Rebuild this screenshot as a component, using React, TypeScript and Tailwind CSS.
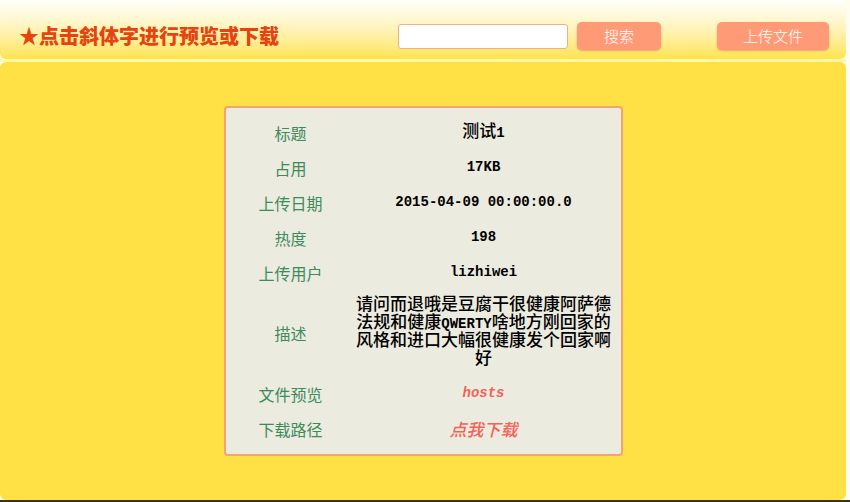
const mono = "font-['Liberation_Mono','Noto_Sans_CJK_SC',monospace] text-[14px]";
const cjk = 'text-[17px] font-medium';

const rows: { label: string; value: React.ReactNode; tall?: boolean }[] = [
  {
    label: '标题',
    value: (
      <>
        <span className={cjk}>测试</span>1
      </>
    ),
  },
  { label: '占用', value: '17KB' },
  { label: '上传日期', value: '2015-04-09 00:00:00.0' },
  { label: '热度', value: '198' },
  { label: '上传用户', value: 'lizhiwei' },
  {
    label: '描述',
    value: (
      <>
        <span className={cjk}>请问而退哦是豆腐干很健康阿萨德</span>
        <br />
        <span className={cjk}>法规和健康</span>QWERTY<span className={cjk}>啥地方刚回家的</span>
        <br />
        <span className={cjk}>风格和进口大幅很健康发个回家啊</span>
        <br />
        <span className={cjk}>好</span>
      </>
    ),
    tall: true,
  },
];

function App() {
  return (
    <div className="w-[850px] h-[502px] bg-[#fffdf0] overflow-hidden font-['Noto_Sans_CJK_SC',sans-serif]">
      <div className="w-[846px] h-[500px] flex flex-col">
        {/* Header */}
        <header className="h-[59px] shrink-0 rounded-b-md rounded-tr-md bg-gradient-to-b from-[#fffffb] via-[#fff3b8] to-[#ffe34a] flex items-center pt-[13px] pl-[19px] pr-[17px]">
          <h1 className="text-[20px] font-black text-[#e4450e] leading-none mt-[-1px]">
            ★点击斜体字进行预览或下载
          </h1>
          <div className="ml-auto flex items-center">
            <input
              type="text"
              className="w-[170px] h-[25px] bg-white border border-[#f0b083] rounded-[3px] outline-none px-1"
            />
            <button className="ml-[9px] w-[84px] h-[28px] rounded-[5px] bg-[#ff9a76] text-white text-[15px] font-light shadow-[0_1px_2px_rgba(200,110,60,0.5)]">
              搜索
            </button>
            <button className="ml-[56px] w-[112px] h-[28px] rounded-[5px] bg-[#ff9a76] text-white text-[15px] font-light shadow-[0_1px_2px_rgba(200,110,60,0.5)]">
              上传文件
            </button>
          </div>
        </header>
        <div className="h-[3px] shrink-0 bg-[#fff8a2]" />

        {/* Body */}
        <main className="flex-1 rounded-md bg-[#ffe145] flex justify-center pt-[44px]">
          <div className="w-[399px] h-[350px] rounded-[4px] border-2 border-[#f3a474] bg-[#ecebdf] pt-[7px]">
            {rows.map((r) => (
              <div key={r.label} className={`flex items-center ${r.tall ? 'h-[86px]' : 'h-[35px]'}`}>
                <div className="w-[130px] text-center text-[16px] text-[#3d8a5c]">{r.label}</div>
                <div
                  className={`w-[256px] text-center text-black font-bold ${mono} ${
                    r.tall ? 'leading-[18px]' : ''
                  }`}
                >
                  {r.value}
                </div>
              </div>
            ))}
            <div className="flex items-center h-[35px]">
              <div className="w-[130px] text-center text-[16px] text-[#3d8a5c]">文件预览</div>
              <div className={`w-[256px] text-center italic font-bold text-[#f3625a] cursor-pointer ${mono}`}>
                hosts
              </div>
            </div>
            <div className="flex items-center h-[35px]">
              <div className="w-[130px] text-center text-[16px] text-[#3d8a5c]">下载路径</div>
              <div className="w-[256px] text-center text-[17px] italic font-medium text-[#f3625a] cursor-pointer">
                点我下载
              </div>
            </div>
          </div>
        </main>
      </div>
      <div className="h-[2px] bg-[#3b3210]" />
    </div>
  );
}

export default App;
